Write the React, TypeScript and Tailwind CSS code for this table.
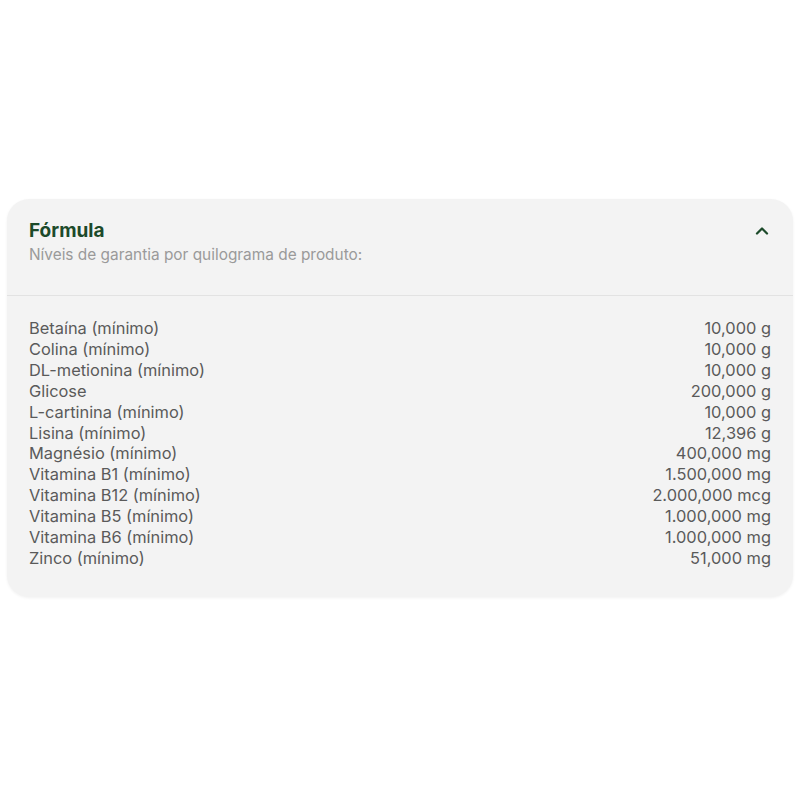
import { ChevronUp } from "lucide-react";

type Item = {
  name: string;
  value: string;
};

const items: Item[] = [
  { name: "Betaína (mínimo)", value: "10,000 g" },
  { name: "Colina (mínimo)", value: "10,000 g" },
  { name: "DL-metionina (mínimo)", value: "10,000 g" },
  { name: "Glicose", value: "200,000 g" },
  { name: "L-cartinina (mínimo)", value: "10,000 g" },
  { name: "Lisina (mínimo)", value: "12,396 g" },
  { name: "Magnésio (mínimo)", value: "400,000 mg" },
  { name: "Vitamina B1 (mínimo)", value: "1.500,000 mg" },
  { name: "Vitamina B12 (mínimo)", value: "2.000,000 mcg" },
  { name: "Vitamina B5 (mínimo)", value: "1.000,000 mg" },
  { name: "Vitamina B6 (mínimo)", value: "1.000,000 mg" },
  { name: "Zinco (mínimo)", value: "51,000 mg" },
];

export default function App() {
  return (
    <div
      className="w-[800px] h-[800px] bg-white pt-[199px] px-[7px]"
      style={{ fontFamily: "Inter, 'Noto Sans', sans-serif" }}
    >
      <section className="bg-[#f3f3f3] rounded-[22px] shadow-[0_1px_3px_rgba(0,0,0,0.06)]">
        <div className="flex justify-between items-start pl-[22px] pr-[21px] pt-[20px] pb-[28px] border-b border-[#e2e2e2]">
          <div>
            <h2 className="text-[19px] leading-[24px] font-bold text-[#1c4a2a]">Fórmula</h2>
            <p className="text-[15.4px] leading-[24px] text-[#9a9a9a]">
              Níveis de garantia por quilograma de produto:
            </p>
          </div>
          <button className="mt-[2px] text-[#1c4a2a]" aria-label="Recolher">
            <ChevronUp size={20} strokeWidth={2.75} />
          </button>
        </div>

        <div className="pl-[22px] pr-[22px] pt-[22px] pb-[28px]">
          {items.map((item) => (
            <div
              key={item.name}
              className="flex justify-between text-[16.4px] leading-[20.9px] text-[#5a5a5a]"
            >
              <span>{item.name}</span>
              <span>{item.value}</span>
            </div>
          ))}
        </div>
      </section>
    </div>
  );
}
